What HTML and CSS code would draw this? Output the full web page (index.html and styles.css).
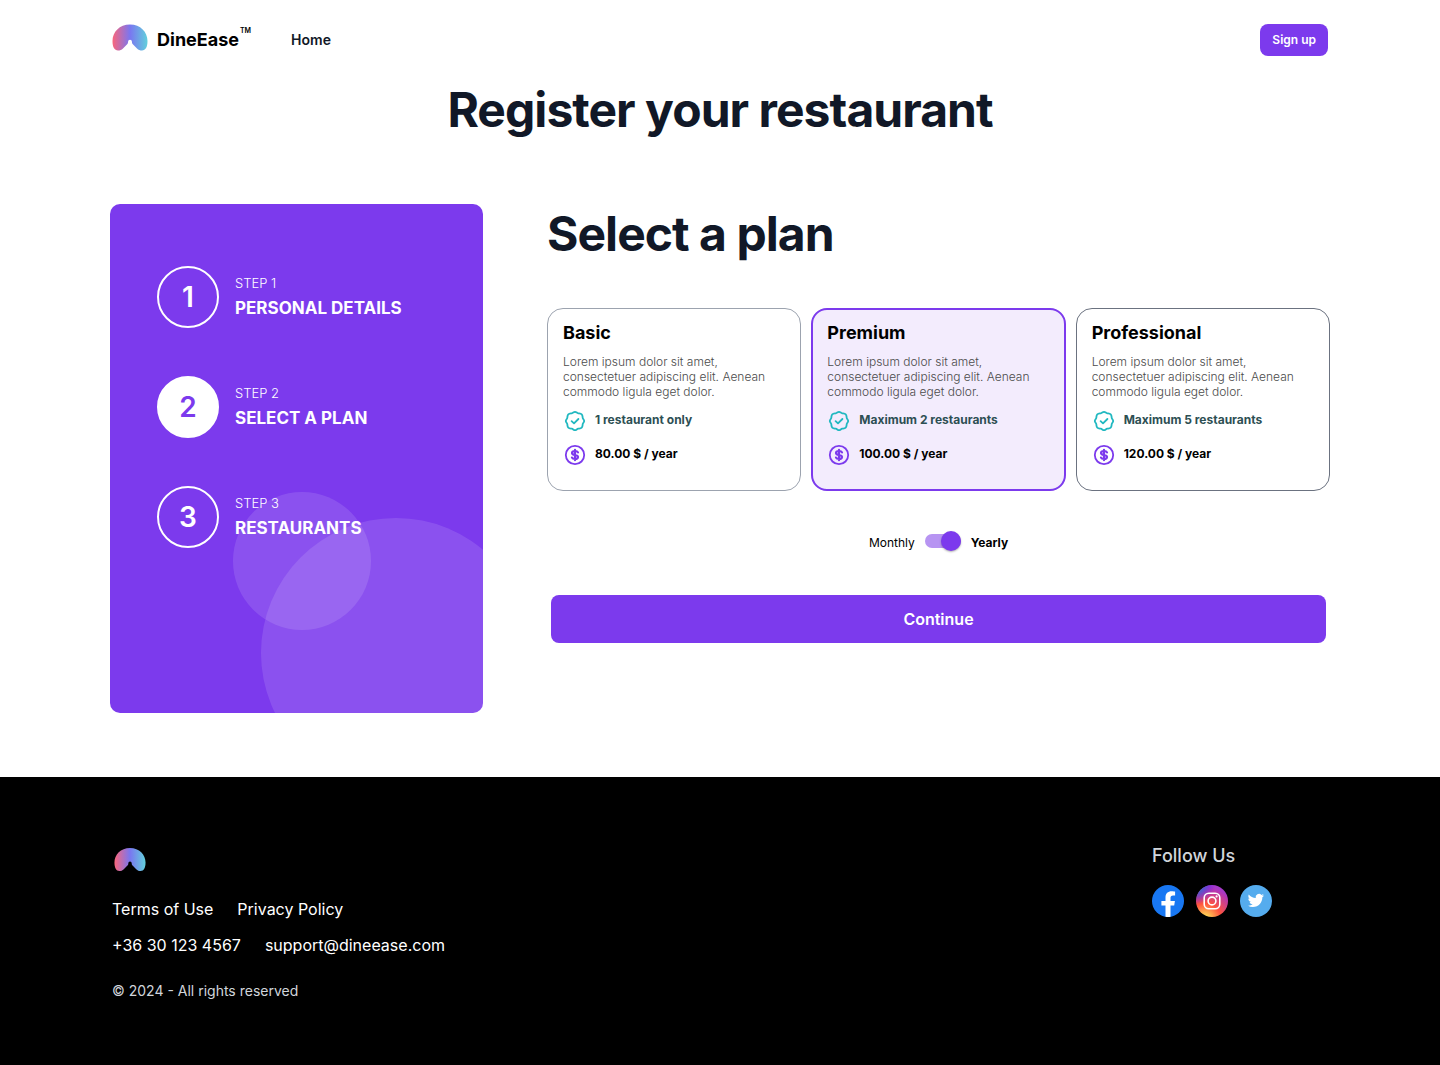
FILE: index.html
```
<!DOCTYPE html>
<html lang="en">
<head>
<meta charset="utf-8">
<meta name="viewport" content="width=device-width, initial-scale=1">
<title>DineEase - Register your restaurant</title>
<link rel="stylesheet" href="styles.css">
</head>
<body>
<svg class="sprite" aria-hidden="true">
  <defs>
    <linearGradient id="brand" x1="0" y1="0" x2="1" y2="0">
      <stop offset="0" stop-color="#f9667c"/>
      <stop offset="0.5" stop-color="#7a76f0"/>
      <stop offset="1" stop-color="#62d0dc"/>
    </linearGradient>
    <radialGradient id="insta" cx="0.28" cy="1.08" r="1.05">
      <stop offset="0" stop-color="#ffdd55"/>
      <stop offset="0.12" stop-color="#ffd255"/>
      <stop offset="0.48" stop-color="#ff543e"/>
      <stop offset="0.92" stop-color="#b437b4"/>
      <stop offset="1" stop-color="#a63ac8"/>
    </radialGradient>
    <radialGradient id="insta-blue" cx="0" cy="0" r="0.6">
      <stop offset="0" stop-color="#3771c8"/>
      <stop offset="0.3" stop-color="#3771c8"/>
      <stop offset="1" stop-color="#6600ff" stop-opacity="0"/>
    </radialGradient>
  </defs>
  <symbol id="logo" viewBox="0 0 36 27">
    <path fill="url(#brand)" d="M18 0.500C28.500 0.500 35.500 8 35.500 17C35.500 23 33.500 26.500 30 26.500C28 26.500 26.500 25.800 25 24.400L20.600 20C20 19.400 20 18.600 19.900 17.600A1.900 1.900 0 0 0 16.100 17.600C16 18.600 16 19.400 15.400 20L11 24.400C9.500 25.800 8 26.500 6 26.500C2.500 26.500 0.500 23 0.500 17C0.500 8 7.500 0.500 18 0.500Z"/>
  </symbol>
  <symbol id="check" viewBox="0 0 24 24">
    <path fill="none" stroke="currentColor" stroke-width="1.800" stroke-linejoin="round" d="M12 2.800C13.300 2.800 14 4.100 15.200 4.300C16.400 4.500 17.700 4.300 18.700 5.300C19.700 6.300 19.500 7.600 19.700 8.800C19.900 10 21.200 10.700 21.200 12C21.200 13.300 19.900 14 19.700 15.200C19.500 16.400 19.700 17.700 18.700 18.700C17.700 19.700 16.400 19.500 15.200 19.700C14 19.900 13.300 21.200 12 21.200C10.700 21.200 10 19.900 8.800 19.700C7.600 19.500 6.300 19.700 5.300 18.700C4.300 17.700 4.500 16.400 4.300 15.200C4.100 14 2.800 13.300 2.800 12C2.800 10.700 4.100 10 4.300 8.800C4.500 7.600 4.300 6.300 5.300 5.300C6.300 4.300 7.600 4.500 8.800 4.300C10 4.100 10.700 2.800 12 2.800Z"/>
    <path fill="none" stroke="currentColor" stroke-width="1.800" stroke-linecap="round" stroke-linejoin="round" d="M8.600 12.200L11 14.400L15.400 10"/>
  </symbol>
  <symbol id="dollar" viewBox="0 0 24 24">
    <circle cx="12" cy="12" r="9.200" fill="none" stroke="currentColor" stroke-width="1.800"/>
    <path fill="none" stroke="currentColor" stroke-width="2.200" stroke-linecap="round" stroke-linejoin="round" d="M15 9.400C14.600 8.500 13.400 8 12 8C10.300 8 9 8.700 9 10C9 11.300 10.300 11.700 12 12C13.700 12.300 15 12.700 15 14C15 15.300 13.700 16 12 16C10.600 16 9.400 15.500 9 14.600M12 6.800V17.200"/>
  </symbol>
</svg>

<header class="header">
  <a class="brand" href="#" aria-label="DineEase">
    <svg class="brand-logo"><use href="#logo"/></svg>
    <span class="brand-name">DineEase<sup class="brand-tm">TM</sup></span>
  </a>
  <nav class="nav"><a href="#">Home</a></nav>
  <button class="signup" type="button">Sign up</button>
</header>

<main class="main">
  <h1 class="title">Register your restaurant</h1>
  <div class="register">
    <aside class="steps">
      <ol class="step-list">
        <li class="step">
          <span class="step-number">1</span>
          <div><p class="step-label">STEP 1</p><p class="step-name">PERSONAL DETAILS</p></div>
        </li>
        <li class="step step-current" aria-current="step">
          <span class="step-number">2</span>
          <div><p class="step-label">STEP 2</p><p class="step-name">SELECT A PLAN</p></div>
        </li>
        <li class="step">
          <span class="step-number">3</span>
          <div><p class="step-label">STEP 3</p><p class="step-name">RESTAURANTS</p></div>
        </li>
      </ol>
    </aside>

    <form class="plan-form">
      <h2 class="title">Select a plan</h2>
      <div class="plans" role="radiogroup" aria-label="Plan">
        <label class="plan">
          <input class="plan-radio" type="radio" name="plan" value="basic">
          <span class="plan-name">Basic</span>
          <span class="plan-text">Lorem ipsum dolor sit amet, consectetuer adipiscing elit. Aenean commodo ligula eget dolor.</span>
          <span class="plan-row plan-limit"><svg class="icon"><use href="#check"/></svg><span class="plan-value">1 restaurant only</span></span>
          <span class="plan-row plan-price"><svg class="icon"><use href="#dollar"/></svg><span class="plan-value">80.00 $ / year</span></span>
        </label>
        <label class="plan">
          <input class="plan-radio" type="radio" name="plan" value="premium" checked>
          <span class="plan-name">Premium</span>
          <span class="plan-text">Lorem ipsum dolor sit amet, consectetuer adipiscing elit. Aenean commodo ligula eget dolor.</span>
          <span class="plan-row plan-limit"><svg class="icon"><use href="#check"/></svg><span class="plan-value">Maximum 2 restaurants</span></span>
          <span class="plan-row plan-price"><svg class="icon"><use href="#dollar"/></svg><span class="plan-value">100.00 $ / year</span></span>
        </label>
        <label class="plan plan-dark">
          <input class="plan-radio" type="radio" name="plan" value="professional">
          <span class="plan-name">Professional</span>
          <span class="plan-text">Lorem ipsum dolor sit amet, consectetuer adipiscing elit. Aenean commodo ligula eget dolor.</span>
          <span class="plan-row plan-limit"><svg class="icon"><use href="#check"/></svg><span class="plan-value">Maximum 5 restaurants</span></span>
          <span class="plan-row plan-price"><svg class="icon"><use href="#dollar"/></svg><span class="plan-value">120.00 $ / year</span></span>
        </label>
      </div>
      <label class="billing">
        <span class="billing-label">Monthly</span>
        <input class="switch" type="checkbox" role="switch" checked>
        <span class="billing-label billing-active">Yearly</span>
      </label>
      <button class="continue" type="button">Continue</button>
    </form>
  </div>
</main>

<footer class="footer">
  <div class="footer-inner">
    <div class="footer-info">
      <svg class="footer-logo" role="img" aria-label="DineEase"><use href="#logo"/></svg>
      <div class="footer-links"><a href="#">Terms of Use</a><a href="#">Privacy Policy</a></div>
      <div class="footer-links"><a href="tel:+36301234567">+36 30 123 4567</a><a href="mailto:support@dineease.com">support@dineease.com</a></div>
      <p class="copyright">© 2024 - All rights reserved</p>
    </div>
    <div class="follow">
      <h2 class="follow-title">Follow Us</h2>
      <div class="social">
        <a href="#" aria-label="Facebook">
          <svg viewBox="0 0 32 32"><circle cx="16" cy="16" r="16" fill="#1877f2"/><path fill="#fff" d="M22.200 20.600L22.900 16H18.500V13C18.500 11.700 19.100 10.500 21.100 10.500H23.100V6.600S21.300 6.300 19.600 6.300C15.900 6.300 13.500 8.500 13.500 12.500V16H9.400V20.600H13.500V31.800A16 16 0 0 0 18.500 31.800V20.600Z"/></svg>
        </a>
        <a href="#" aria-label="Instagram">
          <svg viewBox="0 0 32 32"><circle cx="16" cy="16" r="16" fill="url(#insta)"/><circle cx="16" cy="16" r="16" fill="url(#insta-blue)"/><g fill="none" stroke="#fff" stroke-width="1.600"><rect x="8.200" y="8.200" width="15.600" height="15.600" rx="4.600"/><circle cx="16" cy="16" r="3.900"/></g><circle cx="20.600" cy="11.400" r="1.100" fill="#fff"/></svg>
        </a>
        <a href="#" aria-label="Twitter">
          <svg viewBox="0 0 32 32"><circle cx="16" cy="16" r="16" fill="#55acee"/><path fill="#fff" transform="translate(7.700 7.300) scale(0.680)" d="M23.950 4.570a10 10 0 0 1-2.820.770 4.960 4.960 0 0 0 2.160-2.720c-.950.550-2 .950-3.130 1.180a4.920 4.920 0 0 0-8.380 4.480C7.690 8.100 4.070 6.130 1.640 3.160a4.820 4.820 0 0 0-.670 2.480c0 1.710.870 3.210 2.190 4.100a4.900 4.900 0 0 1-2.230-.620v.060a4.920 4.920 0 0 0 3.950 4.830 5 5 0 0 1-2.210.080 4.940 4.940 0 0 0 4.600 3.420A9.870 9.870 0 0 1 0 19.540a14 14 0 0 0 7.550 2.210c9.050 0 14-7.500 14-13.980 0-.210 0-.420-.020-.630a9.940 9.940 0 0 0 2.460-2.550z"/></svg>
        </a>
      </div>
    </div>
  </div>
</footer>
</body>
</html>
```
FILE: styles.css
```
:root {
  --purple: #7c3aed;
  --ink: #111827;
}

* { box-sizing: border-box; }

body {
  margin: 0;
  min-height: 100vh;
  display: flex;
  flex-direction: column;
  font-family: Inter, "Liberation Sans", sans-serif;
  font-size: 12px;
  color: #000;
  background: #fff;
}

h1, h2, p, ol { margin: 0; padding: 0; }
a { color: inherit; text-decoration: none; }
button { border: 0; font: inherit; color: #fff; background: var(--purple); cursor: pointer; }

.sprite { position: absolute; width: 0; height: 0; }

/* Header */
.header {
  width: 100%;
  max-width: 1220px;
  margin: 0 auto;
  padding: 24px 2px;
  display: flex;
  align-items: center;
}
.brand { display: flex; align-items: flex-start; gap: 9px; }
.brand-logo { width: 36px; height: 27px; }
.brand-name { display: flex; font-size: 18px; line-height: 32px; font-weight: 700; }
.brand-tm { font-size: 7px; line-height: 14px; font-weight: 600; padding-left: 1px; }
.nav { margin-left: 40px; font-size: 14px; line-height: 32px; font-weight: 600; color: var(--ink); }
.signup {
  height: 32px;
  margin-left: auto;
  padding: 0 12px 2px;
  border-radius: 8px;
  font-weight: 600;
}

/* Registration */
.main {
  width: 100%;
  max-width: 1220px;
  margin: 0 auto;
  padding-bottom: 64px;
}
.title { font-size: 48px; line-height: 60px; font-weight: 700; letter-spacing: -0.02em; color: var(--ink); }
h1.title { text-align: center; }
.register {
  margin-top: 64px;
  display: grid;
  grid-template-columns: 373px 1fr;
  gap: 64px;
}

.steps {
  position: relative;
  min-height: 509px;
  padding: 62px 47px;
  border-radius: 10px;
  overflow: hidden;
  color: #fff;
  background: var(--purple);
}
.steps::before, .steps::after {
  content: "";
  position: absolute;
  border-radius: 50%;
  background: rgba(255, 255, 255, 0.12);
}
.steps::before { left: 123px; top: 288px; width: 138px; height: 138px; }
.steps::after { left: 151px; top: 314px; width: 270px; height: 270px; }
.step-list { display: flex; flex-direction: column; gap: 48px; list-style: none; }
.step { display: flex; align-items: center; gap: 16px; }
.step-number {
  width: 62px;
  height: 62px;
  display: grid;
  place-items: center;
  border: 2px solid #fff;
  border-radius: 50%;
  font-size: 28px;
  font-weight: 600;
}
.step-current .step-number { color: var(--purple); background: #fff; }
.step-label { font-size: 13px; line-height: 22px; font-weight: 300; }
.step-name { font-size: 17px; line-height: 28px; font-weight: 700; }

.plan-form { display: flex; flex-direction: column; }
.plans {
  margin-top: 44px;
  display: grid;
  grid-template-columns: repeat(3, 1fr);
  gap: 10px;
}
.plan {
  min-height: 183px;
  padding: 12px 15px;
  display: flex;
  flex-direction: column;
  border: 1px solid #9ca3af;
  border-radius: 16px;
  cursor: pointer;
}
.plan-dark { border-color: #6b7280; }
.plan:has(:checked) {
  padding: 11px 14px;
  border: 2px solid var(--purple);
  background: #f3ecfd;
}
.plan-radio { position: absolute; opacity: 0; }
.plan-name { font-size: 18px; line-height: 24px; font-weight: 700; }
.plan-text { margin: 9px 0 10px; line-height: 15px; font-weight: 300; color: #4b4b4b; }
.plan-row { height: 24px; display: flex; gap: 8px; font-weight: 700; }
.plan-value { line-height: 22px; }
.plan-limit { color: #2d4f53; }
.plan-limit .icon { color: #20b8c0; }
.plan-price { margin-top: 10px; }
.plan-price .icon { color: var(--purple); }
.icon { width: 24px; height: 24px; }

.billing {
  margin: 38px auto 42px;
  height: 24px;
  display: flex;
  align-items: center;
  gap: 10px;
}
.billing-label { padding-top: 2px; }
.billing-active { font-weight: 700; }
.switch {
  appearance: none;
  width: 36px;
  height: 14px;
  margin: 0;
  display: flex;
  align-items: center;
  justify-content: flex-end;
  border-radius: 7px;
  background: #b794f2;
}
.switch::before {
  content: "";
  flex: none;
  width: 20px;
  height: 20px;
  border-radius: 50%;
  background: var(--purple);
  box-shadow: 0 1px 2px rgba(0, 0, 0, 0.3);
}
.switch:not(:checked) { justify-content: flex-start; }
.continue {
  height: 48px;
  margin: 0 4px;
  border-radius: 8px;
  font-size: 16px;
  font-weight: 600;
}

/* Footer */
.footer { flex: 1; padding: 70px 0 64px; background: #000; color: #fff; }
.footer-inner {
  max-width: 1220px;
  margin: 0 auto;
  padding: 0 2px;
  display: flex;
  justify-content: space-between;
}
.footer-info { display: flex; flex-direction: column; }
.footer-logo { width: 32px; height: 25px; margin: 0 2px 25px; }
.footer-links { margin-bottom: 12px; display: flex; gap: 24px; font-size: 16px; line-height: 24px; }
.copyright { margin-top: 12px; font-size: 14px; line-height: 20px; color: #d1d5db; }
.follow { width: 176px; }
.follow-title { font-size: 18px; line-height: 18px; font-weight: 500; color: #d1d5db; }
.social { margin-top: 20px; display: flex; gap: 12px; }
.social svg { display: block; width: 32px; height: 32px; }
```
